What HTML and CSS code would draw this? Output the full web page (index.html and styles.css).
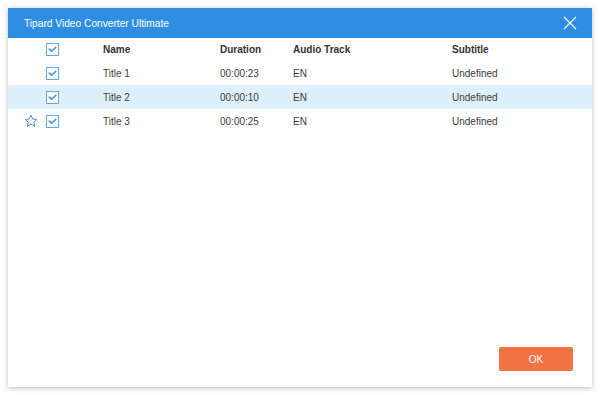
FILE: index.html
```html
<!DOCTYPE html>
<html>
<head>
<meta charset="utf-8">
<link rel="stylesheet" href="styles.css">
</head>
<body>
<div class="dialog">
  <div class="titlebar">
    <span class="title">Tipard Video Converter Ultimate</span>
    <svg class="close" width="14" height="14" viewBox="0 0 14 14"><path d="M1 1L13 13M13 1L1 13" stroke="#fff" stroke-width="1.2" fill="none"/></svg>
  </div>
  <div class="table">
    <div class="row head">
      <div class="star-cell"></div>
      <div class="cb-cell"><span class="cb"><svg width="11" height="11" viewBox="0 0 11 11"><path d="M1.8 4.6L4.6 7.3L9.2 3" stroke="#3d94e0" stroke-width="1.5" fill="none"/></svg></span></div>
      <div>Name</div>
      <div>Duration</div>
      <div>Audio Track</div>
      <div>Subtitle</div>
    </div>
    <div class="row">
      <div class="star-cell"></div>
      <div class="cb-cell"><span class="cb"><svg width="11" height="11" viewBox="0 0 11 11"><path d="M1.8 4.6L4.6 7.3L9.2 3" stroke="#3d94e0" stroke-width="1.5" fill="none"/></svg></span></div>
      <div>Title 1</div>
      <div>00:00:23</div>
      <div>EN</div>
      <div>Undefined</div>
    </div>
    <div class="row selected">
      <div class="star-cell"></div>
      <div class="cb-cell"><span class="cb"><svg width="11" height="11" viewBox="0 0 11 11"><path d="M1.8 4.6L4.6 7.3L9.2 3" stroke="#3d94e0" stroke-width="1.5" fill="none"/></svg></span></div>
      <div>Title 2</div>
      <div>00:00:10</div>
      <div>EN</div>
      <div>Undefined</div>
    </div>
    <div class="row">
      <div class="star-cell"><svg width="14" height="14" viewBox="0 0 14 14"><path d="M7 1.2L8.75 5.05L12.8 5.45L9.75 8.2L10.6 12.3L7 10.2L3.4 12.3L4.25 8.2L1.2 5.45L5.25 5.05Z" stroke="#3d94e0" stroke-width="1" fill="none" stroke-linejoin="round"/></svg></div>
      <div class="cb-cell"><span class="cb"><svg width="11" height="11" viewBox="0 0 11 11"><path d="M1.8 4.6L4.6 7.3L9.2 3" stroke="#3d94e0" stroke-width="1.5" fill="none"/></svg></span></div>
      <div>Title 3</div>
      <div>00:00:25</div>
      <div>EN</div>
      <div>Undefined</div>
    </div>
  </div>
  <div class="footer">
    <button class="ok">OK</button>
  </div>
</div>
</body>
</html>
```
FILE: styles.css
```css
html, body {
  margin: 0;
  padding: 0;
  background: #ffffff;
}
body {
  padding: 8px;
  font-family: "Liberation Sans", Arial, sans-serif;
  font-size: 10px;
  color: #3c3c3c;
}
.dialog {
  width: 584px;
  height: 379px;
  background: #ffffff;
  box-shadow: 0 1px 5px rgba(0, 0, 0, 0.28);
  display: flex;
  flex-direction: column;
}
.titlebar {
  height: 30px;
  background: #2e8fe2;
  color: #ffffff;
  display: flex;
  align-items: center;
  justify-content: space-between;
  padding: 0 15px 0 16px;
  flex-shrink: 0;
}
.title {
  font-size: 10.2px;
}
.close {
  display: block;
}
.table {
  flex: 1;
  display: flex;
  flex-direction: column;
}
.row {
  display: grid;
  grid-template-columns: 38px 57px 117px 73px 159px 1fr;
  height: 24px;
  align-items: center;
}
.row.head {
  height: 23px;
  font-weight: bold;
  color: #333333;
}
.row.selected {
  background: #ddf0fc;
}
.star-cell {
  padding-left: 16px;
  display: flex;
  align-items: center;
}
.star-cell svg {
  display: block;
}
.cb-cell {
  display: flex;
  align-items: center;
}
.cb {
  width: 13px;
  height: 13px;
  box-sizing: border-box;
  border: 1px solid #63a9e8;
  background: #ffffff;
  display: flex;
  align-items: center;
  justify-content: center;
}
.cb svg {
  display: block;
}
.footer {
  display: flex;
  justify-content: flex-end;
  padding: 0 19px 16px 0;
}
.ok {
  width: 74px;
  height: 24px;
  border: none;
  border-radius: 2px;
  background: #f47244;
  color: #ffffff;
  font-family: "Liberation Sans", Arial, sans-serif;
  font-size: 10px;
  padding: 0;
}
```
